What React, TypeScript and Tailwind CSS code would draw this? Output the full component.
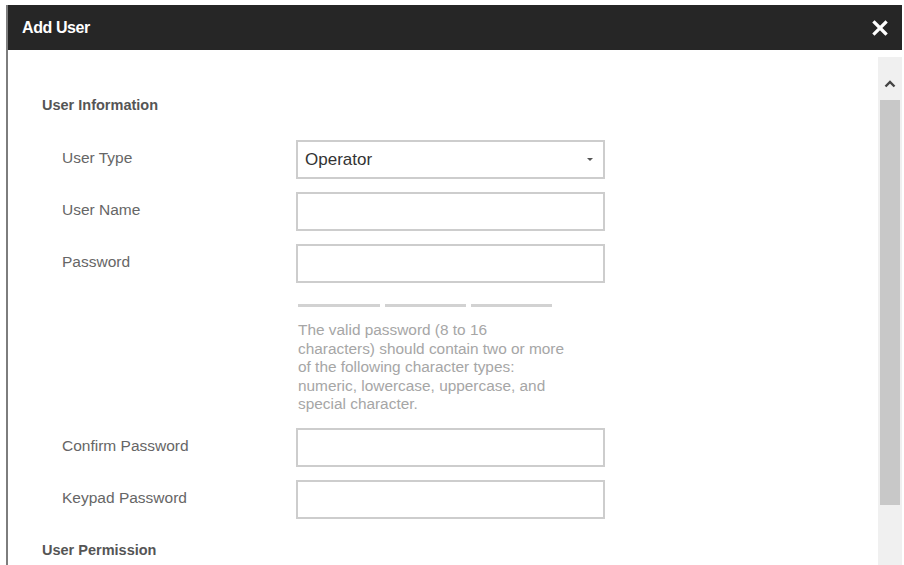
import { ReactNode } from 'react';

const sans = { fontFamily: '"Liberation Sans", Arial, sans-serif' };

const helpLines = [
  'The valid password (8 to 16',
  'characters) should contain two or more',
  'of the following character types:',
  'numeric, lowercase, uppercase, and',
  'special character.',
];

function Field({ label, children }: { label: string; children: ReactNode }) {
  return (
    <div className="flex h-[39px] items-center">
      <div className="w-[254px] pb-[3px] pl-[20px] text-[15.5px] text-[#666]">{label}</div>
      {children}
    </div>
  );
}

function TextBox() {
  return <div className="h-[39px] w-[309px] border-2 border-[#cdcdcd] bg-white" />;
}

function CloseIcon() {
  return (
    <svg width="16" height="16" viewBox="0 0 16 16" aria-hidden>
      <path d="M2.5 2.5 L13.5 13.5 M13.5 2.5 L2.5 13.5" stroke="#fff" strokeWidth="3.2" strokeLinecap="square" />
    </svg>
  );
}

function Scrollbar() {
  return (
    <div className="mt-[7px] flex w-[24px] flex-col bg-[#f0f0f0]">
      <div className="flex h-[43px] items-center justify-center pt-[10px]">
        <svg width="12" height="8" viewBox="0 0 12 8" aria-hidden>
          <path d="M1.5 6.5 L6 2 L10.5 6.5" fill="none" stroke="#444" strokeWidth="2.4" />
        </svg>
      </div>
      <div className="mx-[2px] h-[405px] bg-[#c8c8c8]" />
    </div>
  );
}

export default function App() {
  return (
    <div className="h-[565px] w-[904px] overflow-hidden bg-white pt-[5px] pl-[6px]" style={sans}>
      <div className="flex h-[560px] w-[896px] flex-col border-l-2 border-[#7d7d7d]">
        <header className="flex h-[45px] shrink-0 items-center justify-between bg-[#262626] pl-[14px] pr-[14px]">
          <h1 className="text-[16px] font-bold tracking-[-0.4px] text-white">Add User</h1>
          <CloseIcon />
        </header>

        <div className="flex flex-1">
          <div className="flex-1 pl-[34px]">
            <h2 className="mt-[45px] text-[14.5px] leading-[20px] font-bold text-[#555]">User Information</h2>

            <div className="mt-[25px] flex flex-col gap-[13px]">
              <Field label="User Type">
                <div className="flex h-[39px] w-[309px] items-center justify-between border-2 border-[#cdcdcd] pr-[10px] pl-[7px]">
                  <span className="text-[17px] text-[#333]">Operator</span>
                  <span className="h-0 w-0 border-x-[3px] border-t-[3px] border-x-transparent border-t-[#555]" />
                </div>
              </Field>
              <Field label="User Name">
                <TextBox />
              </Field>
              <Field label="Password">
                <TextBox />
              </Field>
            </div>

            <div className="ml-[256px]">
              <div className="mt-[21px] flex gap-[5px]">
                <span className="h-[3px] w-[82px] bg-[#d2d2d2]" />
                <span className="h-[3px] w-[81px] bg-[#d2d2d2]" />
                <span className="h-[3px] w-[81px] bg-[#d2d2d2]" />
              </div>
              <p className="mt-[14px] text-[15.4px] leading-[18.5px] text-[#a6a6a6]">
                {helpLines.map((line) => (
                  <span key={line} className="block whitespace-nowrap">
                    {line}
                  </span>
                ))}
              </p>
            </div>

            <div className="mt-[14px] flex flex-col gap-[13px]">
              <Field label="Confirm Password">
                <TextBox />
              </Field>
              <Field label="Keypad Password">
                <TextBox />
              </Field>
            </div>

            <h2 className="mt-[21px] text-[14.5px] leading-[20px] font-bold text-[#555]">User Permission</h2>
          </div>
          <Scrollbar />
        </div>
      </div>
    </div>
  );
}
